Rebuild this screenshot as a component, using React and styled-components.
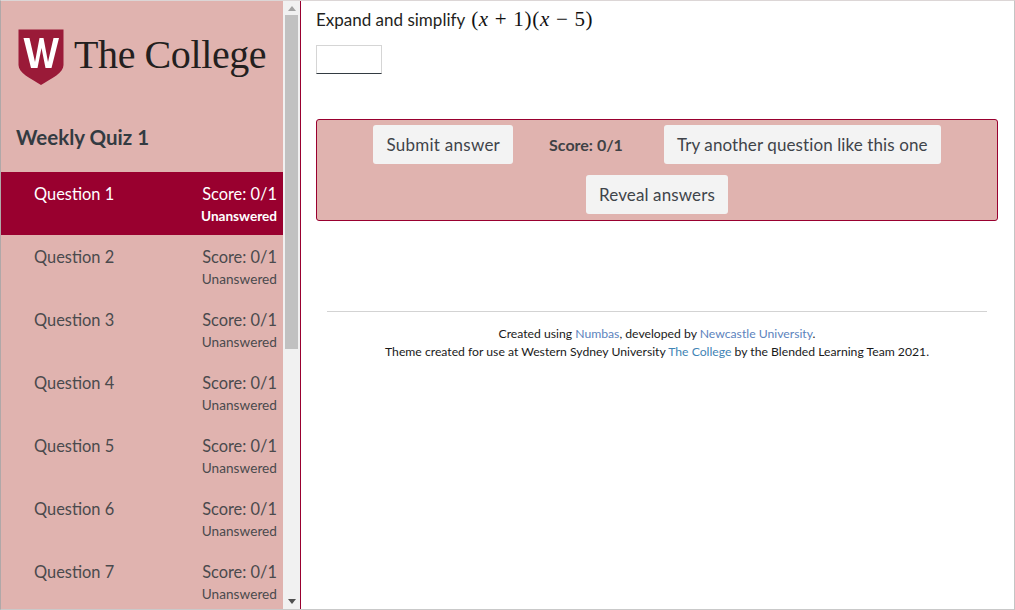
import styled, { createGlobalStyle } from "styled-components";

const questions = [1, 2, 3, 4, 5, 6, 7];

export default function App() {
  return (
    <>
      <GlobalStyle />
      <Page>
        <Sidebar>
          <SidebarContent>
            <LogoRow>
              <Shield viewBox="0 0 46 56">
                <path d="M0.5 0.5H45.5V36C45.5 44 34 49 23 56C12 49 0.5 44 0.5 36Z" fill="#9a1a38" />
                <path d="M5.5 9H11.5L17 33L21.5 9H25.5L30 33L35.5 9H41L33.5 39H27.5L23.5 19L19.5 39H13Z" fill="#ffffff" />
              </Shield>
              <LogoText>The College</LogoText>
            </LogoRow>
            <QuizTitle>Weekly Quiz 1</QuizTitle>
            {questions.map((n) => (
              <QuestionRow key={n} $active={n === 1}>
                <QuestionName>Question {n}</QuestionName>
                <QuestionStatus>
                  <QuestionScore>Score: 0/1</QuestionScore>
                  <QuestionState $active={n === 1}>Unanswered</QuestionState>
                </QuestionStatus>
              </QuestionRow>
            ))}
          </SidebarContent>
          <Scrollbar>
            <ArrowUp />
            <Thumb />
            <ArrowDown />
          </Scrollbar>
        </Sidebar>
        <Main>
          <Prompt>
            Expand and simplify{" "}
            <MathText>
              (<i>x</i> + 1)(<i>x</i> − 5)
            </MathText>
          </Prompt>
          <AnswerInput />
          <ControlPanel>
            <ControlRow>
              <ControlButton $tracking="0.26px">Submit answer</ControlButton>
              <PanelScore>Score: 0/1</PanelScore>
              <ControlButton $tracking="0.1px">Try another question like this one</ControlButton>
            </ControlRow>
            <ControlRow>
              <ControlButton $tracking="0.12px">Reveal answers</ControlButton>
            </ControlRow>
          </ControlPanel>
          <Footer>
            <FooterLine>
              Created using <FooterLink>Numbas</FooterLink>, developed by{" "}
              <FooterLink>Newcastle University</FooterLink>.
            </FooterLine>
            <FooterLine>
              Theme created for use at Western Sydney University{" "}
              <CollegeLink>The College</CollegeLink> by the Blended Learning Team 2021.
            </FooterLine>
          </Footer>
        </Main>
      </Page>
    </>
  );
}

const GlobalStyle = createGlobalStyle`
  html, body {
    margin: 0;
    padding: 0;
    background: #ffffff;
    overflow: hidden;
  }
  body {
    font-family: "Lato", "Open Sans", sans-serif;
  }
`;

const Page = styled.div`
  width: 1015px;
  height: 610px;
  box-sizing: border-box;
  display: flex;
  border-top: 1px solid #dcd6d6;
  border-bottom: 1px solid #c9c9c9;
  border-left: 1px solid #b0a8a8;
  border-right: 1px solid #c4c4c4;
  overflow: hidden;
`;

const Sidebar = styled.aside`
  width: 300px;
  flex-shrink: 0;
  display: flex;
  border-right: 1px solid #99002f;
  box-sizing: border-box;
  height: 100%;
`;

const SidebarContent = styled.div`
  width: 282px;
  background: #e0b3af;
  overflow: hidden;
`;

const LogoRow = styled.div`
  display: flex;
  align-items: center;
  gap: 10px;
  padding: 28px 0 0 17px;
  height: 56px;
`;

const Shield = styled.svg`
  width: 46px;
  height: 56px;
  flex-shrink: 0;
`;

const LogoText = styled.span`
  margin-top: -5px;
  font-family: "Liberation Serif", serif;
  font-size: 40px;
  line-height: 50px;
  letter-spacing: -0.4px;
  color: #231f20;
  white-space: nowrap;
`;

const QuizTitle = styled.h1`
  margin: 0;
  padding: 36px 0 0 15px;
  height: 51px;
  font-size: 20.5px;
  line-height: 32px;
  font-weight: 700;
  color: #333b42;
`;

const QuestionRow = styled.div`
  height: 63px;
  box-sizing: border-box;
  display: flex;
  justify-content: space-between;
  padding: 10px 6px 0 33px;
  color: ${(p) => (p.$active ? "#ffffff" : "#4a4a4d")};
  background: ${(p) => (p.$active ? "#99002f" : "transparent")};
`;

const QuestionName = styled.span`
  font-size: 16.4px;
  line-height: 24px;
`;

const QuestionStatus = styled.div`
  display: flex;
  flex-direction: column;
  align-items: flex-end;
`;

const QuestionScore = styled.span`
  font-size: 16.4px;
  line-height: 24px;
`;

const QuestionState = styled.span`
  font-size: 13.6px;
  line-height: 20px;
  font-weight: ${(p) => (p.$active ? 700 : 400)};
  letter-spacing: ${(p) => (p.$active ? "0" : "0.05px")};
`;

const Scrollbar = styled.div`
  width: 17px;
  background: #f1f1f1;
  display: flex;
  flex-direction: column;
  align-items: center;
`;

const ArrowUp = styled.div`
  width: 0;
  height: 0;
  margin: 5px 0 4px;
  border-left: 4px solid transparent;
  border-right: 4px solid transparent;
  border-bottom: 5px solid #a3a3a3;
`;

const Thumb = styled.div`
  width: 13px;
  height: 334px;
  background: #c1c1c1;
`;

const ArrowDown = styled.div`
  width: 0;
  height: 0;
  margin-top: auto;
  margin-bottom: 5px;
  border-left: 4px solid transparent;
  border-right: 4px solid transparent;
  border-top: 5px solid #505050;
`;

const Main = styled.main`
  flex: 1;
  min-width: 0;
  padding: 5px 16px 0 15px;
`;

const Prompt = styled.p`
  margin: 0;
  font-size: 17px;
  line-height: 27px;
  color: #1f1f22;
`;

const MathText = styled.span`
  margin-left: 2px;
  font-family: "Liberation Serif", serif;
  font-size: 21px;
  letter-spacing: 0.7px;
  color: #111111;
`;

const AnswerInput = styled.div`
  width: 66px;
  height: 29px;
  box-sizing: border-box;
  margin-top: 12px;
  border: 1px solid #d5d5d5;
  border-bottom: 1px solid #333b42;
  background: #ffffff;
`;

const ControlPanel = styled.section`
  margin-top: 45px;
  height: 102px;
  box-sizing: border-box;
  padding: 5px 0 0;
  border: 1px solid #99002f;
  border-radius: 3px;
  background: #e0b3af;
  display: flex;
  flex-direction: column;
  gap: 11px;
`;

const ControlRow = styled.div`
  display: flex;
  justify-content: center;
  align-items: center;
  gap: 36px;
`;

const ControlButton = styled.div`
  height: 39px;
  box-sizing: border-box;
  padding: 0 13px;
  display: flex;
  align-items: center;
  border-radius: 3px;
  background: #f3f3f3;
  font-size: 17px;
  letter-spacing: ${(p) => p.$tracking};
  color: #3f444a;
`;

const PanelScore = styled.span`
  margin-right: 5px;
  font-size: 16px;
  font-weight: 700;
  color: #3f4145;
`;

const Footer = styled.footer`
  margin: 90px 11px 0;
  padding-top: 13px;
  border-top: 1px solid #d3d3d3;
  text-align: center;
`;

const FooterLine = styled.div`
  font-size: 12.2px;
  line-height: 18px;
  color: #1a1a1a;
`;

const FooterLink = styled.span`
  color: #5c83bd;
`;

const CollegeLink = styled.span`
  color: #3f84b5;
`;
